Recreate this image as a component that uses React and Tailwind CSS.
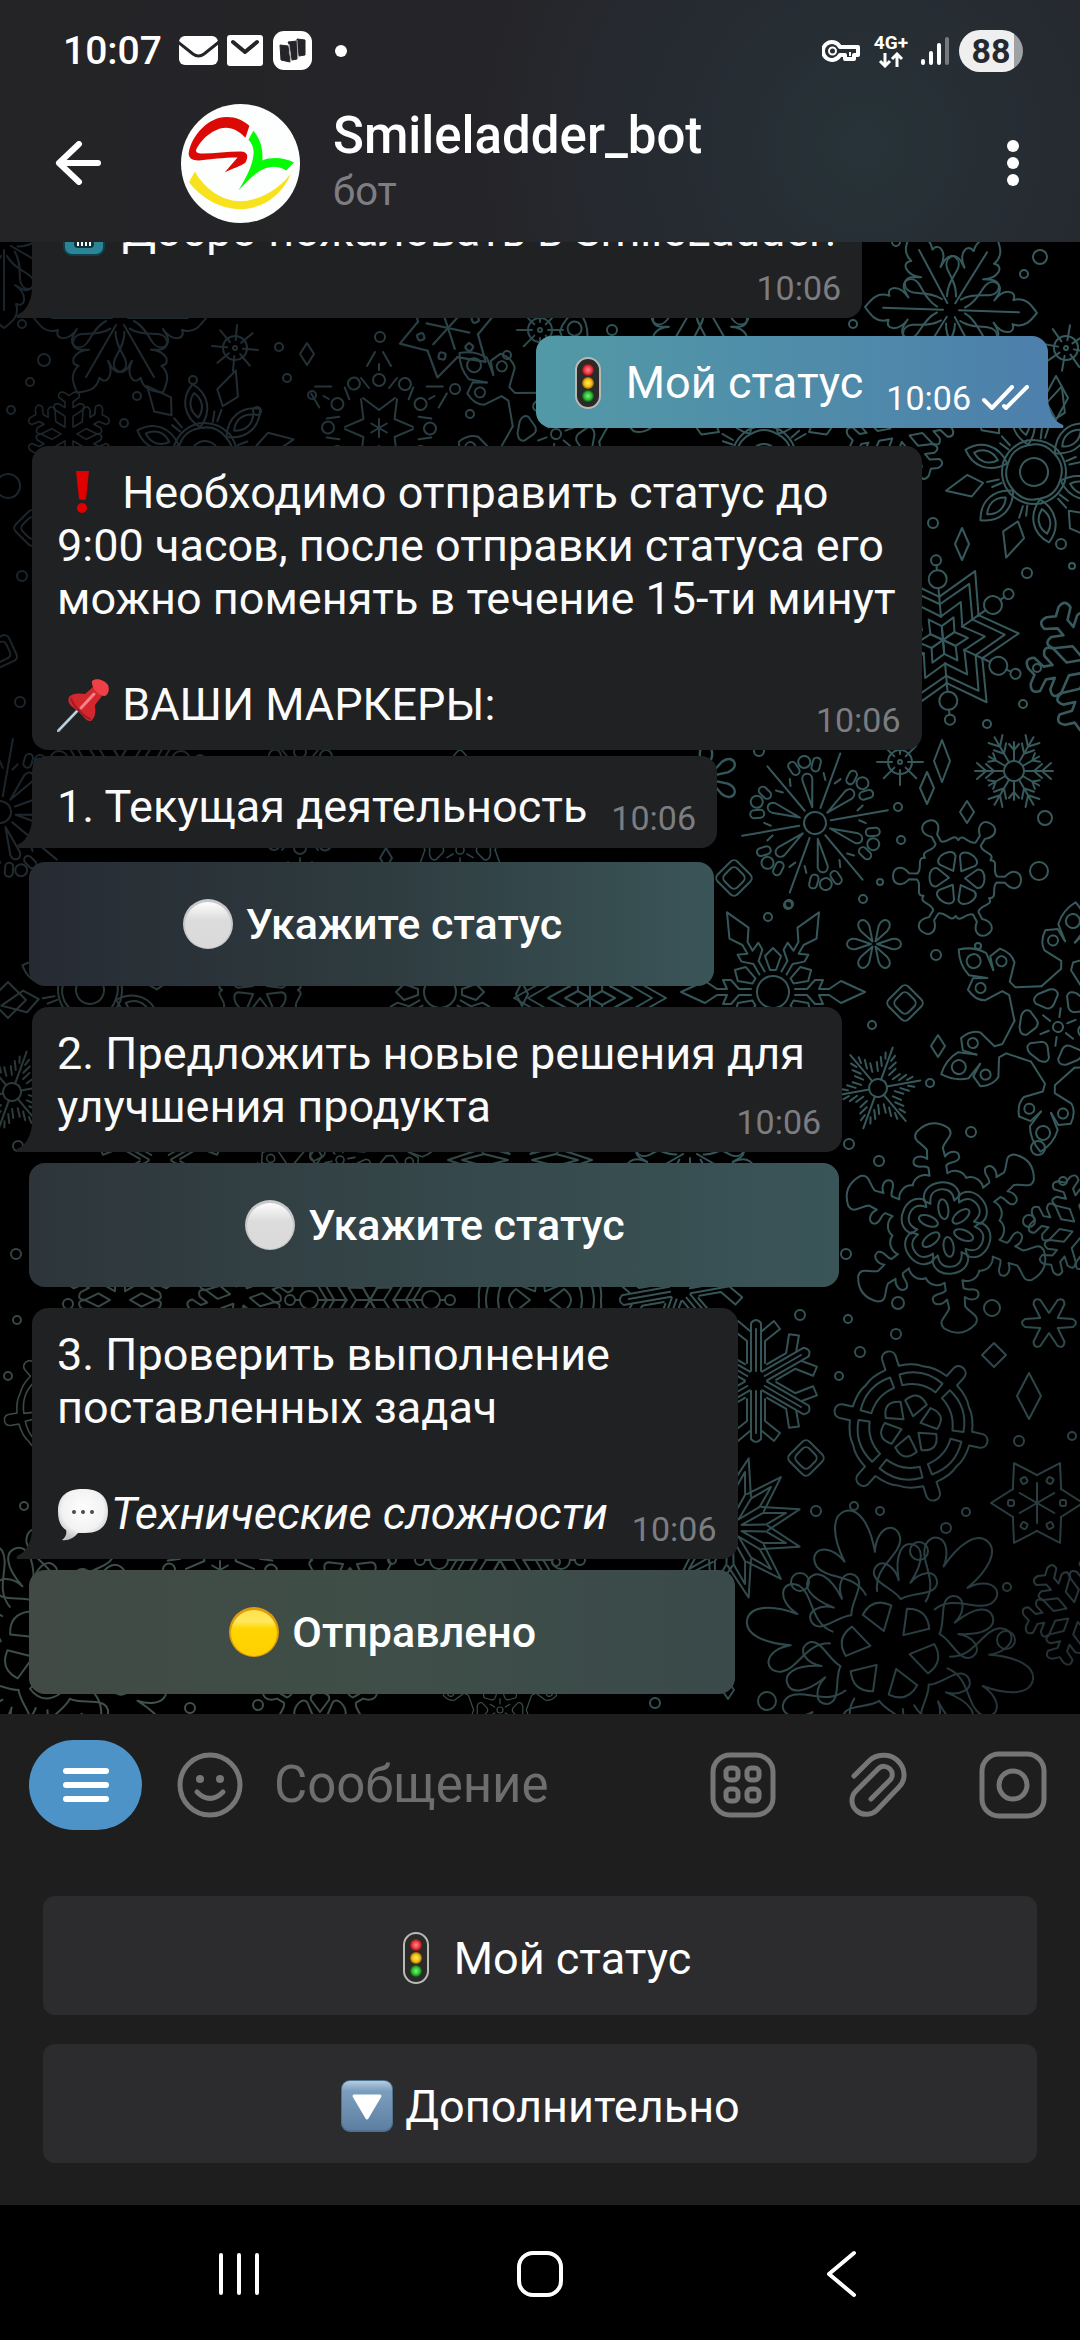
import React from "react";

/* ---------- wallpaper ---------- */

function Spin({ n = 6, offset = 0, children }) {
  return Array.from({ length: n }, (_, i) => (
    <g key={i} transform={`rotate(${offset + (360 / n) * i})`}>
      {children}
    </g>
  ));
}

function At({ x, y, r = 0, s = 1, children }) {
  return <g transform={`translate(${x} ${y}) rotate(${r}) scale(${s})`}>{children}</g>;
}

const Leaf = () => (
  <Spin>
    <path d="M-3 -14C-8 -24 -18 -28 -25 -33C-34 -40 -28 -52 -18 -47L-11 -43C-24 -52 -22 -66 -12 -62C-16 -74 -8 -80 0 -86C8 -80 16 -74 12 -62C22 -66 24 -52 11 -43L18 -47C28 -52 34 -40 25 -33C18 -28 8 -24 3 -14" />
    <path d="M0 -68V-8" />
  </Spin>
);

const Sun = () => (
  <>
    <circle r="12" />
    <circle r="2" />
    <Spin n={8}>
      <path d="M0 -8V-23" />
    </Spin>
  </>
);

const Flower = () => (
  <>
    <circle r="14" />
    <Spin>
      <path d="M-13 -24Q0 -32 13 -24M-16 -28Q0 -36 16 -28" />
      <path d="M0 -36V-48M-4 -34L-6 -44" />
      <path d="M0 -52L-11 -66L0 -90L11 -66Z" />
      <g transform="rotate(30)">
        <path d="M0 -28C-15 -42 -14 -60 0 -72C14 -60 15 -42 0 -28Z" />
        <path d="M0 -38C-8 -46 -7 -56 0 -63C7 -56 8 -46 0 -38Z" />
      </g>
    </Spin>
  </>
);

const Star = () => (
  <>
    <Spin>
      <path d="M-22 -37L0 -76L22 -37" />
      <path d="M-18 -31L0 -62L18 -31" />
      <path d="M-12 -20L0 -42L12 -20" />
      <path d="M0 0L-7 -12L0 -25L7 -12Z" />
      <g transform="rotate(30)">
        <path d="M0 -24V-52M0 -70V-75" />
        <circle cy="-61" r="9" />
        <circle cy="-80" r="5" />
      </g>
    </Spin>
  </>
);

const Thin = () => (
  <>
    <circle r="10" />
    <Spin>
      <path d="M0 -10V-39M-8 -37L0 -28L8 -37M-7 -28L0 -20L7 -28" />
      <path transform="rotate(30)" d="M0 -10V-29M-5 -27L0 -21L5 -27" />
    </Spin>
  </>
);

const Burst = () => (
  <>
    <circle r="11" />
    <Spin>
      <path d="M0 -16V-74" />
      <path d="M-5 -44L-9 -50M5 -44L9 -50" />
      <rect x="-17" y="-64" width="8" height="14" rx="4" transform="rotate(-6)" />
      <rect x="9" y="-64" width="8" height="14" rx="4" transform="rotate(6)" />
      <g transform="rotate(30)">
        <path d="M0 -16L-5 -44C-5 -52 5 -52 5 -44Z" />
        <circle cy="-62" r="6" />
      </g>
    </Spin>
  </>
);

const Balls = () => (
  <Spin>
    <path d="M-19 -33C-19 -42 -8 -34 -3 -40L-3 -48C-12 -56 -8 -64 0 -64C8 -64 12 -56 3 -48L3 -40C8 -34 19 -42 19 -33" />
    <path d="M0 -8L-9 -20C-12 -30 12 -30 9 -20Z" />
  </Spin>
);

const DiamondFlake = () => (
  <>
    <circle r="16" />
    <Spin>
      <path d="M-3 -22V-34L-12 -42V-50L-3 -46V-56L-11 -68L0 -92L11 -68L3 -56V-46L12 -50V-42L3 -34V-22" />
      <path transform="rotate(30)" d="M-3 -22L-8 -36L0 -44L8 -36L3 -22Z" />
    </Spin>
  </>
);

const Petals = () => (
  <Spin>
    <path d="M0 -3L-5 -18C-7 -30 7 -30 5 -18Z" />
  </Spin>
);

const Diamond2 = () => (
  <>
    <rect x="-14" y="-14" width="28" height="28" rx="5" transform="rotate(45)" />
    <rect x="-9" y="-9" width="18" height="18" rx="5" transform="rotate(45)" />
  </>
);

const Geo = () => (
  <>
    <circle r="5" />
    <Spin n={6}>
      <path d="M0 -10V-19" />
      <path d="M-12 -30Q-14 -36 -6 -38L6 -38Q14 -36 12 -30L4 -22Q0 -19 -4 -22Z" transform="rotate(30)" />
    </Spin>
    <Spin>
      <path d="M-22 -38L-5 -58L-6 -66L-24 -74Q-30 -82 -26 -94L-14 -97L-5 -86M22 -38L5 -58L6 -66L24 -74Q30 -82 26 -94L14 -97L5 -86" />
      <path d="M-5 -86L-14 -102Q-12 -116 0 -126Q12 -116 14 -102L5 -86" />
      <circle cy="-107" r="7" />
      <circle cx="-17" cy="-85" r="5" />
      <circle cx="17" cy="-85" r="5" />
    </Spin>
  </>
);

const Fir = () => (
  <>
    <circle r="9" />
    <Spin>
      <path d="M0 -9V-43M-5 -36L-3 -30M5 -36L3 -30M-8 -30L-4 -22M8 -30L4 -22M-10 -24L-6 -16M10 -24L6 -16" />
    </Spin>
  </>
);

const Big = () => (
  <Spin>
    <path d="M-27 -47C-24 -56 -14 -57 -9 -54L-9 -62C-13 -66 -20 -62 -23 -68C-24 -76 -14 -76 -9 -71L-8 -80C-12 -88 -22 -91 -16 -99Q0 -112 16 -99C22 -91 12 -88 8 -80L9 -71C14 -76 24 -76 23 -68C20 -62 13 -66 9 -62L9 -54C14 -57 24 -56 27 -47" />
    <path d="M-18 -30C-18 -42 -8 -46 0 -46C8 -46 18 -42 18 -30L12 -26C12 -36 6 -39 0 -39C-6 -39 -12 -36 -12 -26Z" />
    <ellipse cy="-19" rx="5" ry="10" />
  </Spin>
);

const Crystal = () => (
  <Spin>
    <path d="M-5 -10V-58Q0 -64 5 -58V-10" />
    <path d="M0 -10V-52" />
    <path d="M-9 -18V-40L-24 -52L-18 -60L-6 -50M9 -18V-40L24 -52L18 -60L6 -50" />
  </Spin>
);

const Wheel = () => (
  <Spin>
    <path d="M-30 -53C-24 -58 -16 -60 -7 -61L-7 -72C-6 -80 6 -80 7 -72L7 -61C16 -60 24 -58 30 -53" />
    <g transform="rotate(30)">
      <path d="M-22 -48Q0 -60 22 -48L17 -38Q0 -46 -17 -38Z" />
      <path d="M0 -10L-11 -24Q0 -38 11 -24Z" />
    </g>
  </Spin>
);

const Six = () => (
  <Spin>
    <path d="M-5 -9L-4 -24Q0 -30 4 -24L5 -9" />
  </Spin>
);

const StarLine = () => (
  <Spin>
    <path d="M-14 -24L0 -46L14 -24" />
    <path transform="rotate(30)" d="M0 0V-20" />
    <rect x="-3" y="-29" width="6" height="6" rx="2" />
  </Spin>
);

const Rays = () => (
  <Spin n={12}>
    <path d="M-12 -36L0 -72L12 -36" />
    <path d="M0 -12L-6 -36L0 -58L6 -36Z" />
  </Spin>
);

const Bloom = () => (
  <Spin n={6}>
    <path d="M0 -20L-15 -42Q0 -56 15 -42Z" />
    <path d="M-6 -60C-10 -84 -38 -86 -44 -102C-48 -120 -26 -124 -16 -98C-20 -126 -14 -146 0 -146C14 -146 20 -126 16 -98C26 -124 48 -120 44 -102C38 -86 10 -84 6 -60" />
    <g transform="rotate(30)">
      <path d="M0 -52C-10 -62 -34 -62 -32 -76C-28 -90 -12 -82 -6 -70C-16 -96 -10 -108 0 -108C10 -108 16 -96 6 -70C12 -82 28 -90 32 -76C34 -62 10 -62 0 -52Z" />
    </g>
  </Spin>
);

const Branch = () => (
  <Spin>
    <path d="M-5 -9V-22L-17 -30Q-22 -38 -13 -38L-5 -33V-40L-13 -46Q-14 -54 -6 -52L0 -48L6 -52Q14 -54 13 -46L5 -40V-33L13 -38Q22 -38 17 -30L5 -22V-9" />
  </Spin>
);

const Comb = () => (
  <Spin>
    <path d="M-16 -30L0 -18L16 -30M-12 -62L-4 -76M12 -62L4 -76M-10 -40L-18 -50M10 -40L18 -50" />
    <circle cy="-48" r="6" />
    <path d="M0 -58V-64M0 0V-9" />
    <circle cx="22" cy="-46" r="6" transform="rotate(5)" />
  </Spin>
);

const SHAPES = {
  Leaf, Sun, Flower, Star, Thin, Burst, Balls, DiamondFlake, Petals, Diamond2,
  Geo, Fir, Big, Crystal, Wheel, Six, StarLine, Rays, Bloom, Branch, Comb,
};

const FLAKES = [
  ["Leaf", 951, 310, 92], ["Sun", 1066, 348, 10], ["Flower", 1034, 472, 18],
  ["Star", 943, 640, 25], ["Branch", 1096, 664, 20, 1.3], ["Thin", 1014, 771, 30],
  ["Burst", 815, 823, 20], ["Balls", 957, 878, 32], ["Diamond2", 734, 878, 0],
  ["DiamondFlake", 773, 992, 30], ["Petals", 874, 944, 30], ["Diamond2", 905, 1003, 0],
  ["Geo", 1058, 1027, 8], ["Fir", 878, 1088, 20], ["Big", 946, 1228, -8],
  ["Crystal", 756, 1381, 0], ["Diamond2", 806, 1458, 0], ["Wheel", 911, 1426, -18],
  ["Six", 1049, 1323, 30], ["StarLine", 1037, 1503, 30], ["Rays", 730, 1528, 15],
  ["Bloom", 890, 1650, -18], ["Branch", 1076, 1612, 20], ["Branch", 1082, 1228, 40],
  ["Leaf", 120, 318, 30], ["Leaf", 4, 242, 60], ["Sun", 235, 348, 5], ["Branch", 69, 434, 0, 0.8],
  ["Flower", 205, 455, 20], ["Comb", 379, 428, 0], ["StarLine", 448, 328, 12, 1.1],
  ["Geo", 556, 434, 10], ["Sun", 540, 330, 0], ["Leaf", 700, 295, 30], ["Flower", 764, 458, 0],
  ["Branch", 900, 432, 20], ["Diamond2", 32, 528, 0], ["Diamond2", 0, 652, 20],
  ["Burst", 0, 812, 10], ["Star", 120, 760, 0], ["Comb", 300, 800, 0], ["Geo", 460, 850, 0, 0.8],
  ["Petals", 706, 778, 0, 1.2], ["Flower", 90, 990, 20], ["Balls", 260, 990, 0],
  ["DiamondFlake", 440, 992, 0], ["Star", 590, 998, 30], ["Fir", 12, 1092, 20],
  ["Crystal", 160, 1160, 0], ["Geo", 340, 1160, 20, 0.8], ["Rays", 520, 1160, 0],
  ["Leaf", 690, 1150, 0], ["Branch", 120, 1300, 0], ["Branch", 240, 1296, 10],
  ["Star", 370, 1300, 0], ["Wheel", 540, 1300, 0], ["Crystal", 680, 1290, 20],
  ["Wheel", 66, 1410, 20, 0.8], ["Bloom", 52, 1650, 10], ["Comb", 220, 1570, 0],
  ["Balls", 350, 1560, 0], ["Star", 500, 1560, 0], ["Balls", 320, 1720, 0],
  ["Geo", 500, 1710, 0, 0.6], ["Sun", 900, 762, 0],
];

const DOTS = [
  [1040, 257, 7], [1024, 274, 4], [896, 242, 4], [853, 324, 4], [612, 330, 5], [22, 324, 4], [44, 360, 6],
  [30, 382, 4], [11, 410, 4], [193, 380, 4], [137, 396, 4], [124, 423, 4], [257, 411, 4], [279, 347, 4],
  [287, 378, 4], [312, 395, 4], [380, 337, 5], [455, 389, 5], [470, 414, 4], [507, 355, 4], [8, 486, 12],
  [22, 576, 5], [20, 702, 5], [933, 523, 5], [1061, 544, 5], [1027, 573, 5], [1072, 566, 3], [1037, 668, 4],
  [1023, 704, 4], [987, 724, 4], [759, 751, 5], [1045, 818, 7], [898, 807, 4], [901, 840, 4], [1039, 871, 9],
  [880, 882, 3], [789, 904, 4], [863, 899, 4], [768, 917, 4], [788, 905, 4], [936, 955, 5],
  [978, 946, 3], [872, 1025, 4], [930, 1083, 4], [849, 1144, 5], [879, 1161, 5], [971, 1132, 5],
  [1038, 1148, 7], [1063, 1181, 4], [1029, 1221, 6], [846, 1254, 5], [898, 1303, 6], [992, 1308, 8],
  [848, 1319, 4], [896, 1334, 5], [860, 1352, 5], [839, 1376, 4], [800, 1315, 5], [1019, 1441, 5],
  [1072, 1436, 4], [816, 1511, 5], [854, 1506, 4], [880, 1511, 4], [946, 1528, 5], [966, 1512, 4],
  [919, 1551, 9], [800, 1582, 9], [1006, 1640, 9], [1007, 1587, 4], [767, 1701, 9], [16, 1254, 5],
  [68, 1304, 5], [17, 1320, 4], [8, 1376, 4], [24, 1506, 4], [190, 1708, 5], [258, 1705, 5], [655, 1703, 5],
  [335, 1087, 5], [18, 1146, 5], [392, 1560, 4], [556, 1562, 4],
];

const GEMS = [
  [307, 354, 7, 11], [962, 544, 7, 16], [942, 761, 8, 21], [927, 788, 7, 16], [967, 812, 7, 11],
  [938, 1046, 7, 11], [994, 1355, 12, 12], [1029, 1396, 12, 23], [728, 1690, 6, 9], [1056, 398, 12, 22],
  [386, 858, 6, 10], [522, 994, 6, 12], [316, 1156, 6, 9], [8, 1000, 18, 18],
];

function Wallpaper() {
  return (
    <svg
      className="absolute inset-0 h-full w-full"
      viewBox="0 242 1080 1472"
      preserveAspectRatio="xMidYMin slice"
      aria-hidden="true"
    >
      <defs>
        <linearGradient id="wpBase" x1="0" y1="0" x2="1" y2="0">
          <stop offset="0" stopColor="#1b242b" />
          <stop offset="0.25" stopColor="#222e34" />
          <stop offset="0.6" stopColor="#34565a" />
          <stop offset="1" stopColor="#365a5d" />
        </linearGradient>
        <radialGradient id="wpGreen" cx="0.15" cy="1" r="0.65">
          <stop offset="0" stopColor="#42534b" />
          <stop offset="0.5" stopColor="#3b4c48" stopOpacity="0.85" />
          <stop offset="1" stopColor="#3b4c48" stopOpacity="0" />
        </radialGradient>
        <radialGradient id="wpDark" cx="1" cy="1" r="0.4">
          <stop offset="0" stopColor="#222c31" />
          <stop offset="1" stopColor="#222c31" stopOpacity="0" />
        </radialGradient>
        <mask id="wpMask" maskUnits="userSpaceOnUse" x="0" y="242" width="1080" height="1472">
          <g fill="none" stroke="#fff" strokeWidth="2" strokeLinecap="round" strokeLinejoin="round">
            {FLAKES.map(([kind, x, y, r, s], i) => {
              const Shape = SHAPES[kind];
              return (
                <At key={i} x={x} y={y} r={r} s={s}>
                  <Shape />
                </At>
              );
            })}
            {DOTS.map(([x, y, r], i) => (
              <circle key={i} cx={x} cy={y} r={r} />
            ))}
            {GEMS.map(([x, y, w, h], i) => (
              <path key={i} d={`M${x} ${y - h}L${x + w} ${y}L${x} ${y + h}L${x - w} ${y}Z`} />
            ))}
          </g>
        </mask>
      </defs>
      <g mask="url(#wpMask)">
        <rect y="242" width="1080" height="1472" fill="url(#wpBase)" />
        <rect y="242" width="1080" height="1472" fill="url(#wpGreen)" />
        <rect y="242" width="1080" height="1472" fill="url(#wpDark)" />
      </g>
    </svg>
  );
}

/* ---------- emoji drawings ---------- */

function Emoji({ label, children }) {
  return (
    <svg
      viewBox="0 0 54 54"
      role="img"
      aria-label={label}
      className="inline-block size-[54px] shrink-0 align-[-12px]"
    >
      {children}
    </svg>
  );
}

const TrafficLight = () => (
  <Emoji label="Светофор">
    <defs>
      <radialGradient id="tlR"><stop offset="0" stopColor="#ff8a8e" /><stop offset="0.6" stopColor="#ee3a42" /><stop offset="1" stopColor="#8d1118" /></radialGradient>
      <radialGradient id="tlY"><stop offset="0" stopColor="#fff04a" /><stop offset="0.6" stopColor="#f6bd1c" /><stop offset="1" stopColor="#8c6208" /></radialGradient>
      <radialGradient id="tlG"><stop offset="0" stopColor="#7df27a" /><stop offset="0.6" stopColor="#2fbf35" /><stop offset="1" stopColor="#0e5a14" /></radialGradient>
    </defs>
    <rect x="15" y="2" width="24" height="50" rx="12" fill="#2a2a28" stroke="#b9b9b4" strokeWidth="2" />
    <circle cx="27" cy="14" r="6" fill="url(#tlR)" />
    <circle cx="27" cy="27" r="6" fill="url(#tlY)" />
    <circle cx="27" cy="40" r="6" fill="url(#tlG)" />
  </Emoji>
);

const Robot = () => (
  <Emoji label="Робот">
    <rect x="3" y="22" width="48" height="16" rx="5" fill="#8d1a1f" />
    <rect x="7" y="8" width="40" height="43" rx="8" fill="#2b8597" stroke="#123f49" strokeWidth="2" />
    <circle cx="18" cy="22" r="5" fill="#e9f6f8" />
    <circle cx="36" cy="22" r="5" fill="#e9f6f8" />
    <rect x="17" y="36" width="20" height="8" rx="4" fill="#113138" />
    <path d="M20 40h2M24 40h2M28 40h2M32 40h2" stroke="#fff" strokeWidth="4" />
  </Emoji>
);

const Exclamation = () => (
  <Emoji label="Восклицательный знак">
    <path d="M19 5h13l-3 28q-3 2-7 0Z" fill="#e00000" />
    <circle cx="25" cy="42" r="5" fill="#e00000" />
  </Emoji>
);

const Pushpin = () => (
  <Emoji label="Канцелярская кнопка">
    <path d="M1 53L22 31" stroke="#9fb4c4" strokeWidth="3" strokeLinecap="round" />
    <path d="M2 52L20 33" stroke="#e6eef4" strokeWidth="1" strokeLinecap="round" />
    <path d="M12 19C17 14 24 16 28 16L36 9L45 18L38 27C38 31 40 38 34 43C30 44 26 38 22 34C17 30 9 26 12 19Z" fill="#d3272e" />
    <path d="M35 3C39 -1 48 2 51 7C53 12 51 17 48 18C43 19 34 11 35 3Z" fill="#ef4047" />
    <path d="M24 30L37 16" stroke="#f98084" strokeWidth="3" strokeLinecap="round" />
    <path d="M14 20C15 27 28 40 34 41" stroke="#a51a22" strokeWidth="2" fill="none" />
  </Emoji>
);

const WhiteCircle = () => (
  <Emoji label="Белый круг">
    <defs>
      <linearGradient id="wc" x1="0" y1="0" x2="0" y2="1"><stop offset="0" stopColor="#fdfdfd" /><stop offset="0.4" stopColor="#dcdcdc" /><stop offset="1" stopColor="#dadada" /></linearGradient>
    </defs>
    <circle cx="27" cy="27" r="25" fill="#c8c8ca" />
    <circle cx="27" cy="28" r="23" fill="url(#wc)" />
  </Emoji>
);

const YellowCircle = () => (
  <Emoji label="Жёлтый круг">
    <defs>
      <linearGradient id="yc" x1="0" y1="0" x2="0" y2="1"><stop offset="0" stopColor="#ffe14a" /><stop offset="0.25" stopColor="#ffe860" /><stop offset="0.4" stopColor="#ffd602" /><stop offset="1" stopColor="#ffcf00" /></linearGradient>
    </defs>
    <circle cx="27" cy="27" r="25" fill="#dd9d0c" />
    <circle cx="27" cy="28" r="23" fill="url(#yc)" />
  </Emoji>
);

const Speech = () => (
  <Emoji label="Реплика">
    <defs>
      <radialGradient id="sp" cx="0.5" cy="0.4" r="0.6"><stop offset="0" stopColor="#fff" /><stop offset="0.7" stopColor="#f2f2f2" /><stop offset="1" stopColor="#c4c4c4" /></radialGradient>
    </defs>
    <path d="M26 2C42 2 51 9 51 24C51 38 44 46 28 46H21C17 51 11 54 5 53C9 50 10 46 9 43C3 39 1 33 1 24C1 9 10 2 26 2Z" fill="url(#sp)" />
    <circle cx="17" cy="25" r="2" fill="#4a4a4a" />
    <circle cx="26" cy="25" r="2" fill="#4a4a4a" />
    <circle cx="35" cy="25" r="2" fill="#4a4a4a" />
  </Emoji>
);

const DownButton = () => (
  <Emoji label="Кнопка вниз">
    <defs>
      <linearGradient id="db" x1="0" y1="0" x2="0" y2="1"><stop offset="0" stopColor="#b4cce0" /><stop offset="0.2" stopColor="#7c9ebe" /><stop offset="1" stopColor="#5d80a2" /></linearGradient>
    </defs>
    <rect x="1" y="1" width="52" height="52" rx="9" fill="#4f7290" />
    <rect x="2" y="2" width="50" height="49" rx="8" fill="url(#db)" />
    <path d="M14 17H40L27 39Z" fill="#fff" stroke="#fff" strokeWidth="3" strokeLinejoin="round" />
  </Emoji>
);

/* ---------- chrome ---------- */

function StatusBar() {
  return (
    <div className="flex h-[84px] items-center justify-between pt-[18px] pr-[57px] pl-[63px] text-white">
      <div className="flex items-center">
        <span className="text-[39px] leading-none font-medium">10:07</span>
        <svg viewBox="0 0 134 40" className="ml-[17px] h-10 w-[134px]" aria-hidden="true">
          <rect y="5" width="39" height="29" rx="6" fill="#fff" />
          <path d="M-1 11L14 23Q19.500 27 25 23L40 11" fill="none" stroke="#252428" strokeWidth="3" />
          <rect x="48" y="4" width="36" height="31" rx="3" fill="#fff" />
          <path d="M54 11L66 21L78 11" fill="none" stroke="#252428" strokeWidth="4" strokeLinecap="round" strokeLinejoin="round" />
          <rect x="94" width="39" height="39" rx="11" fill="#fff" />
          <g fill="#252428" stroke="#252428" strokeWidth="1" strokeLinejoin="round">
            <path d="M101 14L109 15L111 31L102 29Z" />
            <path d="M109 11L118 10V28L113 29L111 15Z" />
            <path d="M118 8L126 9V24L120 25L118 10Z" />
          </g>
          <path d="M110 13L112 30M118 9L119 27" stroke="#a5a5a7" strokeWidth="1" />
        </svg>
        <span className="ml-[22px] size-3 rounded-full bg-white" />
      </div>
      <div className="flex items-center">
        <svg viewBox="0 0 38 24" className="h-6 w-[38px]" fill="none" stroke="#fff" strokeWidth="4" aria-hidden="true">
          <path d="M18 8A9 9 0 1 0 18 16H23V20H32V16H36V8Z" strokeLinejoin="round" />
          <circle cx="10.500" cy="12" r="3.500" strokeWidth="2" />
          <path d="M28 17V13" strokeWidth="2" />
        </svg>
        <div className="ml-[14px] flex flex-col items-center">
          <span className="text-[19px] leading-[18px] font-bold">4G+</span>
          <svg viewBox="0 0 26 16" className="h-4 w-[26px]" fill="none" stroke="#fff" strokeWidth="3" aria-hidden="true">
            <path d="M7 1V14M2 9L7 14L12 9M19 15V2M14 7L19 2L24 7" />
          </svg>
        </div>
        <svg viewBox="0 0 28 30" className="ml-[13px] h-[30px] w-7" fill="none" stroke="#fff" strokeWidth="4" strokeLinecap="round" aria-hidden="true">
          <path d="M2 25V27M10 17V27M18 9V27" />
          <path d="M26 3V27" stroke="#77797c" />
        </svg>
        <span className="ml-[10px] flex h-[42px] w-[64px] items-center justify-center rounded-full bg-linear-to-r from-[#efeff0] from-86% to-[#9fa1a4] to-86% text-[34px] leading-none font-bold text-[#25292f]">
          88
        </span>
      </div>
    </div>
  );
}

function Avatar() {
  return (
    <svg viewBox="0 0 120 120" role="img" aria-label="Smileladder" className="size-[119px] shrink-0">
      <circle cx="60" cy="60" r="60" fill="#fcfffd" />
      <path d="M69 22L65 34C59 28 53 24 45 24C34 24 20 35 15 47C16 50 18 50 22 50C34 50 46 48 60 48C68 48 68 54 65 59C60 63 52 65 44 69L57 54C42 54 30 56 18 57C9 57 7 53 8 48C11 32 27 13 46 13C56 13 62 16 69 22Z" fill="#db0a06" />
      <path d="M73 27C80 35 83 46 82 57C92 53 104 54 114 59L106 67C96 61 86 63 77 69C70 74 64 81 58 87C66 74 72 62 73 52C74 45 72 40 68 36Z" fill="#04fb04" />
      <path d="M14 68C24 86 42 98 60 98C82 97 100 84 111 70C102 92 82 106 60 106C38 106 20 94 8 79Z" fill="#f8e11d" />
    </svg>
  );
}

function Header() {
  return (
    <header className="z-10 shrink-0 bg-[radial-gradient(circle_at_80%_60%,#263338,#262b32_22%,#252529_44%,#242326)]">
      <StatusBar />
      <div className="flex h-[158px] items-center pl-[55px] text-white">
        <button type="button" aria-label="Назад" className="shrink-0">
          <svg viewBox="0 0 46 44" className="h-11 w-[46px]" fill="none" stroke="#fff" strokeWidth="6" strokeLinecap="round" strokeLinejoin="round">
            <path d="M43 22H4M24 3L4 22L24 41" />
          </svg>
        </button>
        <div className="ml-20">
          <Avatar />
        </div>
        <div className="ml-[33px] flex-1">
          <h1 className="text-[51px] leading-[58px] font-medium">Smileladder_bot</h1>
          <p className="text-[40px] leading-[54px] text-[#7e7e82]">бот</p>
        </div>
        <button type="button" aria-label="Меню чата" className="mr-[50px] flex w-[34px] flex-col items-center gap-[5px]">
          <span className="size-3 rounded-full bg-white" />
          <span className="size-3 rounded-full bg-white" />
          <span className="size-3 rounded-full bg-white" />
        </button>
      </div>
    </header>
  );
}

/* ---------- messages ---------- */

function Tail() {
  return (
    <svg viewBox="0 0 16 28" className="absolute bottom-0 -left-4 h-7 w-4" aria-hidden="true">
      <path d="M16 0C15 13 9 22 1 25Q0 26 1 28H16Z" fill="#202123" />
    </svg>
  );
}

const Time = () => <time className="text-[34px] leading-10 text-[#7c7d80]">10:06</time>;

function Bubble({ tail = true, single = false, lines, last }) {
  return (
    <article
      className={`relative ml-[3px] rounded-2xl bg-[#202123] pr-[21px] pb-[10px] pl-[25px] text-[45px] leading-[53px] whitespace-nowrap text-[#fbfbfb] ${tail ? "rounded-bl-none" : ""} ${single ? "pt-6" : "pt-5"}`}
    >
      {lines.map((line, i) => (
        <p key={i} className="h-[53px] pr-[5px]">
          {line}
        </p>
      ))}
      <div className="flex items-end justify-between gap-6">
        <p className={`h-[53px] ${single ? "mb-[5px]" : "mb-[9px]"}`}>{last}</p>
        <Time />
      </div>
      {tail && <Tail />}
    </article>
  );
}

function InlineButton({ className, children }) {
  return (
    <button
      type="button"
      className={`mr-[3px] flex h-[124px] items-center justify-center gap-[11px] rounded-2xl text-[43px] leading-[53px] font-medium text-white ${className}`}
    >
      {children}
    </button>
  );
}

function Messages() {
  return (
    <div className="relative flex flex-col items-start pb-5 pl-[29px]">
      <article className="relative ml-[3px] flex flex-col rounded-2xl rounded-bl-none bg-[#202123] pt-5 pr-[21px] pb-[10px] pl-[25px] text-[45px] leading-[53px] whitespace-nowrap text-[#fbfbfb]">
        <p className="h-[53px] pr-[5px]"><Robot /> Добро пожаловать в SmileLadder!</p>
        <div className="mt-2 self-end leading-10">
          <Time />
        </div>
        <Tail />
      </article>

      <article className="relative mt-[18px] mr-8 flex items-end gap-[23px] self-end rounded-2xl rounded-br-none bg-linear-to-r from-[#5299a6] to-[#4d80ac] pt-5 pr-[19px] pb-[10px] pl-[25px] text-[45px] leading-[53px] whitespace-nowrap text-white">
        <p className="mb-[9px] h-[53px]"><TrafficLight /> Мой статус</p>
        <div className="flex items-center gap-[11px] text-[34px] leading-10">
          <time>10:06</time>
          <svg viewBox="0 0 47 26" className="h-[26px] w-[47px]" fill="none" stroke="#fff" strokeWidth="4" strokeLinecap="round" strokeLinejoin="round" role="img" aria-label="Прочитано">
            <path d="M2 15L10 23L30 2M22 21L24 23L45 2" />
          </svg>
        </div>
        <svg viewBox="0 0 16 28" className="absolute -right-4 bottom-0 h-7 w-4" aria-hidden="true">
          <path d="M0 0C1 13 7 22 15 25Q16 26 15 28H0Z" fill="#4d80ac" />
        </svg>
      </article>

      <div className="mt-[18px]">
        <Bubble
          tail={false}
          lines={[
            <><Exclamation /> Необходимо отправить статус до</>,
            "9:00 часов, после отправки статуса его",
            "можно поменять в течение 15-ти минут",
            "",
          ]}
          last={<><Pushpin /> ВАШИ МАРКЕРЫ:</>}
        />
      </div>

      <div className="mt-[6px] flex flex-col gap-[14px]">
        <Bubble single lines={[]} last="1. Текущая деятельность" />
        <InlineButton className="bg-linear-to-r from-[#262b33] via-[#2e3b3f] to-[#3a5558]">
          <WhiteCircle />Укажите статус
        </InlineButton>
      </div>

      <div className="mt-[21px] flex flex-col gap-[11px]">
        <Bubble lines={["2. Предложить новые решения для\u00a0"]} last="улучшения продукта" />
        <InlineButton className="bg-linear-to-r from-[#2d353a] via-[#35474a] to-[#3a5558]">
          <WhiteCircle />Укажите статус
        </InlineButton>
      </div>

      <div className="mt-[21px] flex flex-col gap-[11px]">
        <Bubble
          lines={["3. Проверить выполнение", "поставленных задач", ""]}
          last={<><Speech /><em>Технические сложности</em></>}
        />
        <InlineButton className="bg-linear-to-r from-[#414a44] via-[#3f4e48] to-[#3a4a4a]">
          <YellowCircle />Отправлено
        </InlineButton>
      </div>
    </div>
  );
}

/* ---------- composer ---------- */

function IconButton({ label, children }) {
  return (
    <button type="button" aria-label={label} className="shrink-0 text-[#767676]">
      <svg viewBox="0 0 68 68" className="size-[68px]" fill="none" stroke="currentColor" strokeWidth="5" strokeLinecap="round" strokeLinejoin="round">
        {children}
      </svg>
    </button>
  );
}

function Composer() {
  return (
    <form className="flex h-[142px] items-start pt-[26px] pr-[33px] pl-[29px]" onSubmit={(e) => e.preventDefault()}>
      <button type="button" aria-label="Команды" className="flex h-[90px] w-[113px] shrink-0 flex-col items-center justify-center gap-2 rounded-full bg-[#4d93c7]">
        <span className="h-[6px] w-[46px] rounded-full bg-white" />
        <span className="h-[6px] w-[46px] rounded-full bg-white" />
        <span className="h-[6px] w-[46px] rounded-full bg-white" />
      </button>
      <div className="ml-[34px] flex h-[90px] min-w-0 flex-1 items-center">
        <IconButton label="Эмодзи">
          <circle cx="34" cy="34" r="30" />
          <circle cx="24" cy="28" r="4" fill="currentColor" stroke="none" />
          <circle cx="44" cy="28" r="4" fill="currentColor" stroke="none" />
          <path d="M21 41Q34 54 47 41" />
        </IconButton>
        <input
          type="text"
          aria-label="Сообщение"
          placeholder="Сообщение"
          className="ml-[30px] min-w-0 flex-1 bg-transparent text-[51px] leading-[60px] text-white outline-none placeholder:text-[#6e6e6e]"
        />
        <div className="ml-4 flex items-center gap-[67px]">
          <IconButton label="Клавиатура бота">
            <rect x="4" y="4" width="60" height="60" rx="17" />
            <rect x="17" y="17" width="12" height="12" rx="4" />
            <rect x="38" y="17" width="12" height="12" rx="4" />
            <rect x="17" y="38" width="12" height="12" rx="4" />
            <rect x="38" y="38" width="12" height="12" rx="4" />
          </IconButton>
          <IconButton label="Прикрепить">
            <path d="M10 25L25 10C32 3 45 2 53 9C62 17 62 29 55 36L33 59C28 64 19 65 13 60C7 55 6 46 12 40L34 18C38 14 43 15 46 18C49 21 49 26 46 29L27 48" />
          </IconButton>
          <IconButton label="Видеосообщение">
            <rect x="3" y="3" width="62" height="62" rx="17" />
            <circle cx="34" cy="34" r="14" />
          </IconButton>
        </div>
      </div>
    </form>
  );
}

function Keyboard() {
  const key =
    "flex h-[119px] w-full items-center justify-center gap-[11px] rounded-xl bg-[#2c2c2e] pt-[5px] text-[45px] leading-[53px] text-white";
  return (
    <div className="flex flex-col gap-[29px] px-[43px] pt-10 pb-[42px]">
      <button type="button" className={key}><TrafficLight />Мой статус</button>
      <button type="button" className={key}><DownButton />Дополнительно</button>
    </div>
  );
}

function NavBar() {
  return (
    <nav aria-label="Система" className="grid h-[135px] shrink-0 grid-cols-3 place-items-center bg-black px-[88px] pt-[3px]">
      <button type="button" aria-label="Недавние">
        <svg viewBox="0 0 48 48" className="size-12" stroke="#fff" strokeWidth="4" strokeLinecap="round">
          <path d="M6 5V43M24 5V43M42 5V43" />
        </svg>
      </button>
      <button type="button" aria-label="Домой">
        <svg viewBox="0 0 48 48" className="size-12" fill="none" stroke="#fff" strokeWidth="4">
          <rect x="3" y="3" width="42" height="42" rx="14" />
        </svg>
      </button>
      <button type="button" aria-label="Назад">
        <svg viewBox="0 0 48 48" className="size-12" fill="none" stroke="#fff" strokeWidth="4" strokeLinecap="round" strokeLinejoin="round">
          <path d="M37 3L12 24L37 45" />
        </svg>
      </button>
    </nav>
  );
}

export default function App() {
  return (
    <div className="flex h-screen flex-col overflow-hidden bg-black font-[Roboto,sans-serif]">
      <Header />
      <main className="relative flex min-h-0 flex-1 flex-col justify-end overflow-hidden bg-black">
        <Wallpaper />
        <Messages />
      </main>
      <footer className="shrink-0 bg-[#1e1e1e]">
        <Composer />
        <Keyboard />
      </footer>
      <NavBar />
    </div>
  );
}
